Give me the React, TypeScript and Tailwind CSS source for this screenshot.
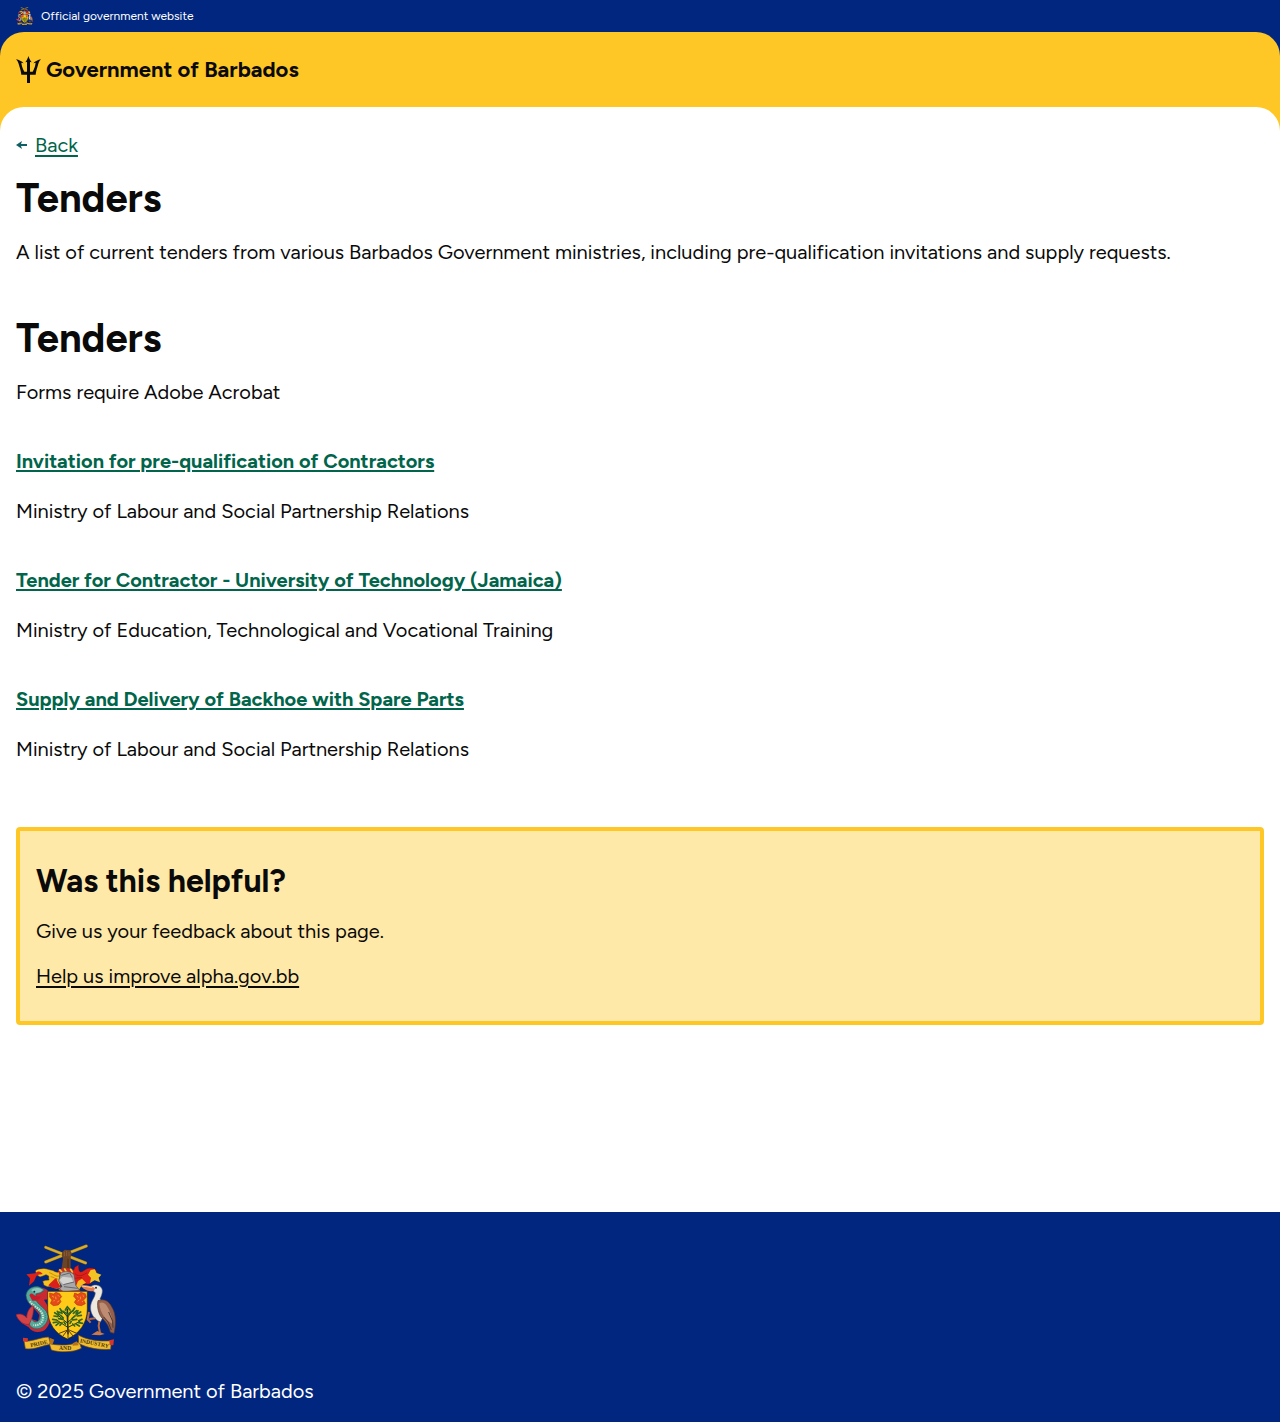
import React from "react";

type Tender = { title: string; ministry: string };

const tenders: Tender[] = [
  {
    title: "Invitation for pre-qualification of Contractors",
    ministry: "Ministry of Labour and Social Partnership Relations",
  },
  {
    title: "Tender for Contractor - University of Technology (Jamaica)",
    ministry: "Ministry of Education, Technological and Vocational Training",
  },
  {
    title: "Supply and Delivery of Backhoe with Spare Parts",
    ministry: "Ministry of Labour and Social Partnership Relations",
  },
];

function CoatOfArms({ className }: { className: string }) {
  return (
    <svg viewBox="18 18 300 324" className={className} role="img" aria-label="Coat of arms of Barbados">
      {/* crossed sugar canes held by a raised fist */}
      <g stroke="#9c7a1c" strokeWidth="9" strokeLinecap="round">
        <path d="M107 28 227 75M107 72 229 24" />
      </g>
      <g stroke="#dcae25" strokeWidth="6" strokeLinecap="round">
        <path d="M107 28 227 75M107 72 229 24" />
      </g>
      <path d="M154 96 159 62 155 52 157 42 164 35 180 37 185 45 182 58 182 96Z" fill="#6b4325" />
      <path d="M163 41v14M170 39v15M177 42v13" stroke="#9b693e" strokeWidth="2" />
      <path d="M174 62v30" stroke="#4c2d18" strokeWidth="3" />
      {/* mantling */}
      <path d="M150 100C140 108 132 96 122 96 112 94 107 90 96 92 88 92 80 94 76 99L80 110 90 117 99 114 108 110 116 114 116 120 117 126 106 127 98 130 102 142 112 146 122 146 132 150 140 152 152 150L148 126Z" fill="#f5c21f" stroke="#5b2e16" strokeWidth="1.5" />
      <path d="M98 108C92 98 82 98 76 106L49 109 60 121 57 143 72 130 78 116C84 108 92 110 98 108Z" fill="#dc2118" />
      <path d="M115 142C122 134 132 124 139 120L143 132 152 147C138 154 126 152 115 142Z" fill="#d8201c" />
      <path d="M150 112C140 120 130 108 118 104M146 124C136 124 130 116 122 116" stroke="#a97512" strokeWidth="2" fill="none" />
      <path d="M182 104C188 104 192 96 194 88L206 80C206 92 206 100 212 102 222 100 228 90 240 90 250 90 258 92 260 100 254 108 244 108 238 112 244 120 250 126 244 134 236 142 226 136 218 138 212 146 202 152 190 146L182 124Z" fill="#dd211a" stroke="#65140f" strokeWidth="1.5" />
      <path d="M242 96 254 94 260 105 274 110 266 119 270 133 254 127 240 135 243 120 234 110Z" fill="#f3c324" />
      <path d="M204 129 216 122 228 134 216 141 207 155 198 145Z" fill="#f6b81b" />
      <path d="M195 107C208 120 220 110 231 104M190 125C200 116 208 122 216 118" stroke="#98120e" strokeWidth="2" fill="none" />
      <path d="M145 96C154 89 181 89 191 96L190 106 147 108Z" fill="#d9281c" />
      <path d="M148 94 158 105M163 91 171 105M181 92 188 104" stroke="#f4c72b" strokeWidth="5" />
      {/* helmet */}
      <path d="M152 106C161 98 183 99 192 110L197 142 210 158 158 162 146 155 156 145 146 130Z" fill="#aaa9a9" stroke="#535358" strokeWidth="2" />
      <path d="M148 126 158 116 184 119 190 132 161 140Z" fill="#d4d4d2" />
      <path d="M154 112 179 105 187 118M160 140 192 132M162 146 203 151" stroke="#66666a" strokeWidth="3" fill="none" />
      <path d="M149 155 160 162 210 159" stroke="#c92b20" strokeWidth="4" fill="none" />
      {/* dolphin */}
      <path d="M74 151C88 146 106 148 115 160L117 184 102 185C108 196 120 212 122 230 124 250 112 274 97 280 80 286 64 280 56 268L35 255 20 232 38 233 52 240C50 226 58 216 64 208L70 212 62 242 84 250 88 231C78 214 58 204 50 184Z" fill="#ca2932" />
      <path d="M48 172C50 154 68 142 88 147L104 156 92 164 78 168 77 184C84 204 113 212 114 236 114 256 96 276 74 272 61 269 56 258 54 244L64 240C72 261 92 252 91 231 88 211 50 205 48 172Z" fill="#55a99b" stroke="#235b5d" strokeWidth="2" />
      <path d="M64 157C72 148 88 149 98 155L92 162 74 166Z" fill="#8bcaba" />
      <circle cx="73" cy="161" r="3" fill="#172d3c" />
      <path d="M58 172C64 160 70 170 77 174L93 176 83 188 67 188Z" fill="#c61f2b" />
      <path d="M60 190C66 204 98 213 99 236 99 254 87 265 70 261" stroke="#d8e5d2" strokeWidth="6" strokeDasharray="4 3" fill="none" />
      <path d="M68 186C77 205 107 213 107 236 107 256 91 270 69 268" stroke="#26797c" strokeWidth="2" strokeDasharray="3 3" fill="none" />
      <path d="M18 230C28 226 42 228 50 240 50 222 60 206 70 203 72 220 68 240 58 258 44 264 24 248 18 230Z" fill="#d34448" stroke="#971f31" strokeWidth="2" />
      {/* shield */}
      <path d="M113 160H232V213C232 256 207 288 172 303 136 288 113 256 113 213Z" fill="#ffcb18" stroke="#302112" strokeWidth="2" />
      <g fill="#e54a1b" stroke="#a92b13" strokeWidth="1.5">
        <path d="M119 165 130 168 138 163 149 167 155 176 149 183 153 191 145 201 130 203 121 196 126 186 119 177Z" />
        <path d="M194 165 204 169 213 163 226 167 229 177 221 186 226 197 214 203 201 201 193 193 199 184 191 175Z" />
      </g>
      <g stroke="#ffc72c" strokeWidth="2" fill="none">
        <path d="M126 174 132 178M144 172 148 176M130 190 134 186M142 192 148 188M137 176 138 184" />
        <path d="M200 174 205 178M218 172 222 176M203 190 208 186M216 192 220 188M211 176 212 184" />
      </g>
      {/* bearded fig tree */}
      <g stroke="#253b13" strokeLinecap="round" fill="none">
        <path d="M172 214 174 287" strokeWidth="5" />
        <path d="M173 268 140 246M173 256 142 230M174 252 206 226M174 268 210 250M173 237 154 216M174 236 192 212" strokeWidth="3" />
        <path d="M173 276 148 286M172 277 158 295M174 277V300M175 277 190 295M175 275 200 286" strokeWidth="3" stroke="#5a3b16" />
      </g>
      <g stroke="#2c6724" strokeWidth="5" strokeLinecap="round" fill="none">
        <path d="M172 206 166 216M172 206 180 216M160 220 172 228M184 220 174 230M150 212 156 222M194 210 188 220M146 222 156 226M200 218 190 226" />
        <path d="M134 224 144 230M132 234 144 236M142 220 148 230M152 232 160 240M146 242 158 244M128 244 140 246M130 254 142 252M138 262 148 254M150 262 156 254" />
        <path d="M212 222 202 228M214 232 202 234M204 218 198 228M194 234 186 242M200 244 188 246M216 244 206 248M218 256 206 254M208 264 198 258M194 264 188 258M162 252 166 258M184 250 180 256" />
      </g>
      {/* pelican */}
      <path d="M277 158C276 142 254 136 242 146L239 151 256 164C256 178 244 186 242 204 240 224 250 242 271 252L283 231 282 200 270 182C274 174 277 166 277 158Z" fill="#eee9df" stroke="#77706c" strokeWidth="1.5" />
      <path d="M248 146 228 142 212 142C218 153 236 164 252 158L255 151Z" fill="#e57b4b" />
      <path d="M215 144 230 146 247 149" stroke="#ffd08b" strokeWidth="3" fill="none" />
      <circle cx="258" cy="149" r="3" fill="#28232a" />
      <path d="M264 188C282 180 298 190 306 208 316 224 320 250 312 286L301 283C296 262 288 252 276 240 266 230 260 206 264 188Z" fill="#94604b" stroke="#56382e" strokeWidth="2" />
      <path d="M268 196C280 188 290 200 296 214 302 226 308 240 306 257 290 248 270 228 268 196Z" fill="#bd8c72" />
      <path d="M281 237 294 252 304 276M296 222 308 250 309 269" stroke="#4a3936" strokeWidth="3" fill="none" />
      <path d="M268 250 266 264 270 284M256 241 238 243M237 222 233 244 242 254" stroke="#b96b43" strokeWidth="6" fill="none" />
      <path d="M244 290 262 279 284 288 270 292Z" fill="#cc7947" />
      {/* motto ribbon */}
      <g fill="#efbd2d" stroke="#6d451b" strokeWidth="2">
        <path d="M42 309C66 312 88 298 116 297L122 319C98 322 76 336 46 332Z" />
        <path d="M118 317C150 324 186 322 208 311L214 331C190 344 148 344 124 336Z" />
        <path d="M205 291C232 307 268 311 304 308L302 334C264 336 232 330 206 316Z" />
      </g>
      <path d="M39 299 54 301 53 311 39 310ZM312 304 298 307 299 321 310 322Z" fill="#d5342b" />
      <path d="M119 299 133 305 128 318 119 318ZM200 310 188 316 188 323 206 322Z" fill="#b67219" />
      <g fill="#4b3514" fontFamily="Liberation Serif, serif" fontSize="17" fontWeight="700">
        <text x="62" y="328" transform="rotate(-12 62 328)">PRIDE</text>
        <text x="147" y="336">AND</text>
        <text x="209" y="313" transform="rotate(11 209 313)">INDUSTRY</text>
      </g>
    </svg>
  );
}

function Trident() {
  return (
    <svg viewBox="18 18 75 81" className="h-[27px] w-[25px] shrink-0" aria-hidden="true">
      <path
        fill="#0a0a0a"
        d="M55 18C58 26 61 32 65 37L60 36V65H68C73 56 76 47 77 38L70 40C76 33 84 30 93 28C88 33 86 38 84 45C81 55 78 64 77 74H60V99H51V74H34C33 64 30 55 27 45C25 38 23 33 18 28C27 30 35 33 41 40L34 38C35 47 38 56 43 65H51V36L46 37C50 32 53 26 55 18Z"
      />
    </svg>
  );
}

export default function App() {
  return (
    <div className="flex min-h-screen flex-col bg-white font-['Figtree',Lato,sans-serif] text-xl/[30px] text-[#0a0a0a]">
      <div className="flex h-8 items-center gap-2 bg-[#00267f] px-4 text-xs text-white">
        <CoatOfArms className="h-[18px] w-[17px]" />
        <span>Official government website</span>
      </div>
      <div className="bg-[#00267f]">
        <header className="rounded-t-3xl bg-[#ffc726] px-4 py-6">
          <a href="#" className="flex h-[27px] w-fit items-center gap-[5px] text-[22px] font-bold">
            <Trident />
            Government of Barbados
          </a>
        </header>
      </div>
      <div className="flex grow flex-col bg-[#ffc726]">
        <main className="grow rounded-t-3xl bg-white px-4 pt-[23px] pb-16">
          <a href="#" className="flex w-fit items-center gap-2 text-[#00654a]">
            <svg viewBox="0 0 11 8" className="h-2 w-[11px]" aria-hidden="true">
              <path d="M0 4 6 0 5 3H11V5H5L6 8Z" fill="#0e5f64" />
            </svg>
            <span className="underline decoration-2 underline-offset-3">Back</span>
          </a>
          <h1 className="mt-[15px] text-[40px]/[46px] font-bold">Tenders</h1>
          <p className="mt-4">
            A list of current tenders from various Barbados Government ministries, including
            pre-qualification invitations and supply requests.
          </p>
          <section className="mt-12">
            <h2 className="text-[40px]/[46px] font-bold">Tenders</h2>
            <p className="mt-4">Forms require Adobe Acrobat</p>
            {tenders.map((tender) => (
              <article key={tender.title} className="mt-[39px]">
                <h3 className="font-bold">
                  <a href="#" className="text-[#00654a] underline decoration-2 underline-offset-2">
                    {tender.title}
                  </a>
                </h3>
                <p className="mt-5">{tender.ministry}</p>
              </article>
            ))}
          </section>
          <aside className="mt-[63px] rounded border-4 border-[#ffc726] bg-[#ffe9a8] px-4 py-[30px]">
            <h2 className="text-[32px]/[40px] font-bold">Was this helpful?</h2>
            <p className="mt-[15px]">Give us your feedback about this page.</p>
            <p className="mt-[15px]">
              <a href="#" className="underline decoration-2 underline-offset-3">
                Help us improve alpha.gov.bb
              </a>
            </p>
          </aside>
        </main>
      </div>
      <footer className="bg-[#00267f] px-4 pt-8 pb-4 text-white">
        <CoatOfArms className="h-[108px] w-[100px]" />
        <p className="mt-6">© 2025 Government of Barbados</p>
      </footer>
    </div>
  );
}
